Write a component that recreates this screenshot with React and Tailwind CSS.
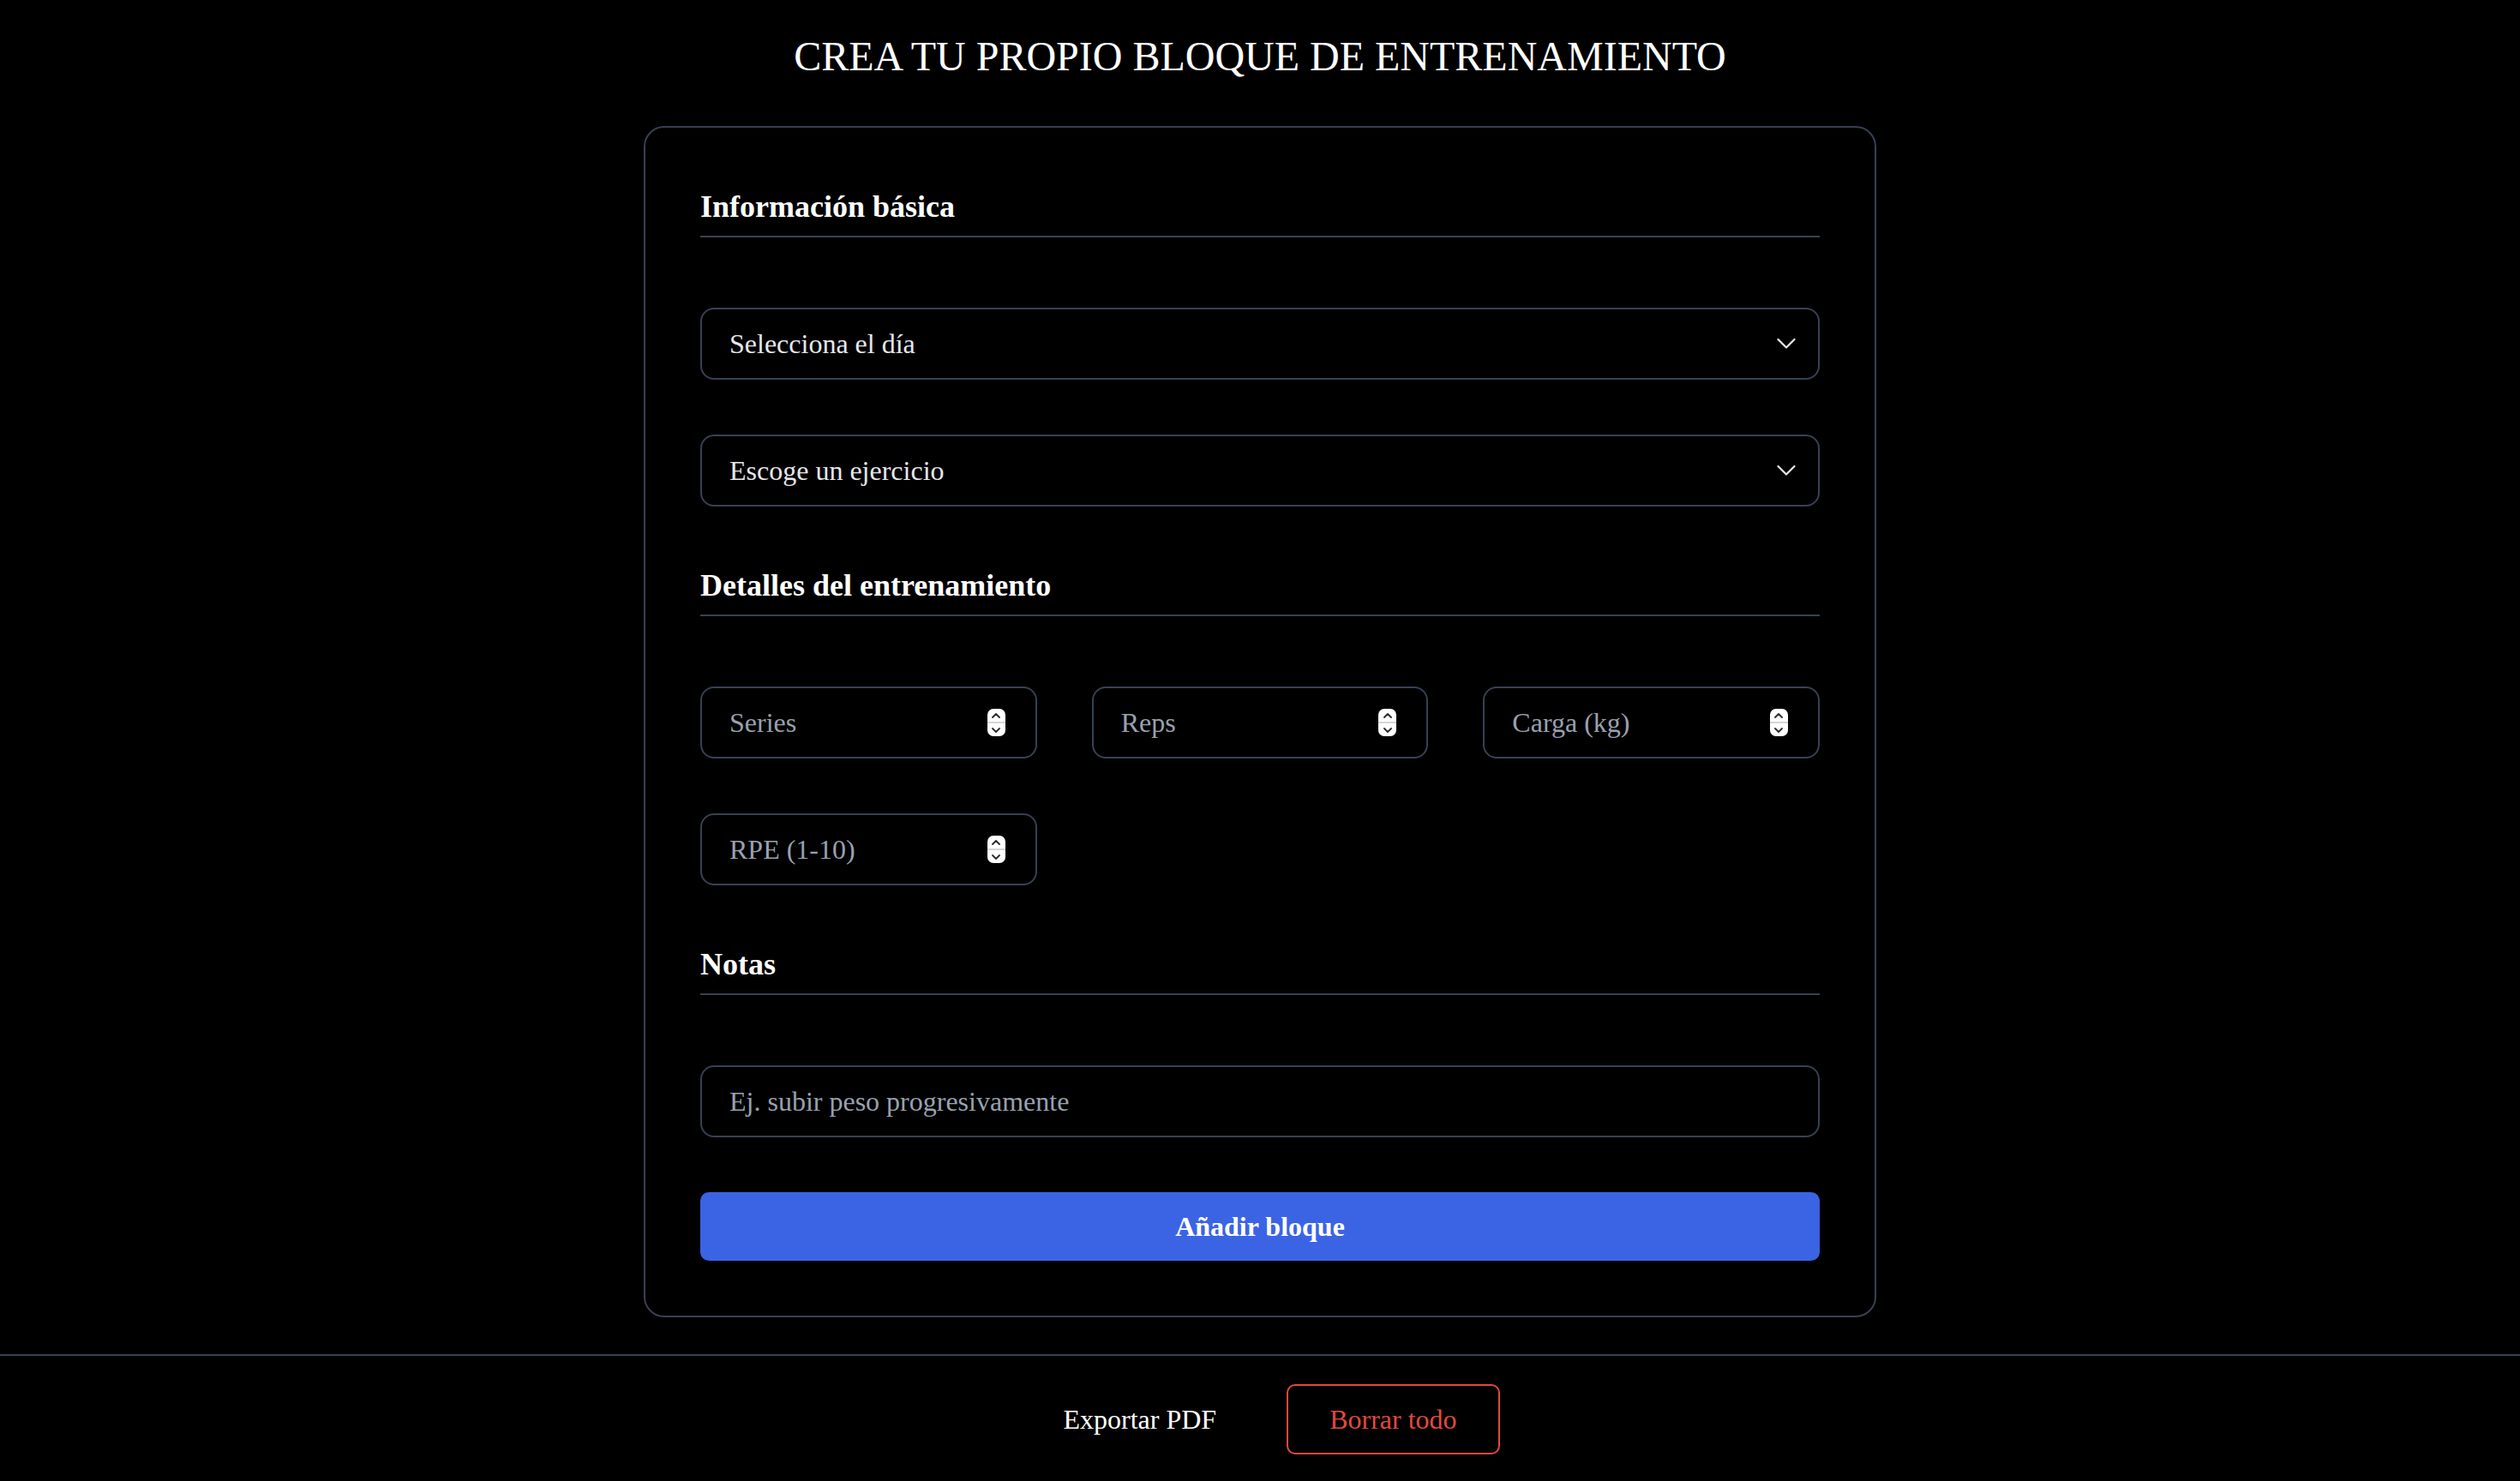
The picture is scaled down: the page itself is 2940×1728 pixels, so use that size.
import React, { useState } from 'react';

const DAYS = ['Lunes', 'Martes', 'Miércoles', 'Jueves', 'Viernes', 'Sábado', 'Domingo'];
const EXERCISES = ['Sentadilla', 'Press banca', 'Peso muerto', 'Press militar', 'Dominadas'];

function SectionTitle({ children }) {
  return (
    <h2 className="border-b-2 border-gray-700 pb-[6px] text-[36px] font-bold leading-[56px] text-white">
      {children}
    </h2>
  );
}

function Chevron() {
  return (
    <svg
      className="pointer-events-none absolute right-[28px] top-1/2 -translate-y-1/2"
      width="22"
      height="13"
      viewBox="0 0 22 13"
      fill="none"
    >
      <polyline points="1.5,1.5 11,11 20.5,1.5" stroke="#e5e7eb" strokeWidth="2.2" strokeLinecap="round" strokeLinejoin="round" />
    </svg>
  );
}

function SelectField({ placeholder, options, value, onChange }) {
  return (
    <div className="relative">
      <select
        value={value}
        onChange={(e) => onChange(e.target.value)}
        className="h-[84px] w-full appearance-none rounded-[16px] border-2 border-gray-700 bg-black px-8 text-[32px] leading-[48px] text-gray-200 outline-none"
      >
        <option value="">{placeholder}</option>
        {options.map((opt) => (
          <option key={opt} value={opt}>
            {opt}
          </option>
        ))}
      </select>
      <Chevron />
    </div>
  );
}

// mac-style stepper drawn by hand, the native one differs per platform
function Stepper() {
  return (
    <div className="pointer-events-none absolute right-[37px] top-1/2 flex h-[32px] w-[21px] -translate-y-1/2 flex-col overflow-hidden rounded-[7px] bg-white">
      <div className="flex flex-1 items-center justify-center border-b-2 border-[#d6d6d6]">
        <svg width="10" height="6" viewBox="0 0 10 6" fill="none">
          <polyline points="1,5 5,1 9,5" stroke="#2b2b2b" strokeWidth="1.8" strokeLinecap="round" strokeLinejoin="round" />
        </svg>
      </div>
      <div className="flex flex-1 items-center justify-center">
        <svg width="10" height="6" viewBox="0 0 10 6" fill="none">
          <polyline points="1,1 5,5 9,1" stroke="#2b2b2b" strokeWidth="1.8" strokeLinecap="round" strokeLinejoin="round" />
        </svg>
      </div>
    </div>
  );
}

function NumberField({ placeholder, value, onChange }) {
  return (
    <div className="relative">
      <input
        type="number"
        placeholder={placeholder}
        value={value}
        onChange={(e) => onChange(e.target.value)}
        className="h-[84px] w-full rounded-[16px] border-2 border-gray-700 bg-black px-8 text-[32px] leading-[48px] text-gray-200 outline-none placeholder:text-gray-400 [appearance:textfield] [&::-webkit-inner-spin-button]:appearance-none [&::-webkit-outer-spin-button]:appearance-none"
      />
      <Stepper />
    </div>
  );
}

export default function App() {
  const [day, setDay] = useState('');
  const [exercise, setExercise] = useState('');
  const [series, setSeries] = useState('');
  const [reps, setReps] = useState('');
  const [load, setLoad] = useState('');
  const [rpe, setRpe] = useState('');
  const [notes, setNotes] = useState('');

  const handleClear = () => {
    setDay('');
    setExercise('');
    setSeries('');
    setReps('');
    setLoad('');
    setRpe('');
    setNotes('');
  };

  return (
    <div className="flex min-h-screen flex-col bg-black font-['Liberation_Serif',serif] text-white">
      <h1 className="mt-[34px] text-center text-[48px] font-normal leading-[64px]">
        CREA TU PROPIO BLOQUE DE ENTRENAMIENTO
      </h1>

      {/* Form card */}
      <div className="mx-auto mt-[49px] flex w-[1438px] flex-col rounded-[24px] border-2 border-gray-700 bg-black p-16">
        <SectionTitle>Información básica</SectionTitle>
        <div className="mt-[82px] flex flex-col gap-16">
          <SelectField placeholder="Selecciona el día" options={DAYS} value={day} onChange={setDay} />
          <SelectField placeholder="Escoge un ejercicio" options={EXERCISES} value={exercise} onChange={setExercise} />
        </div>

        <div className="mt-16">
          <SectionTitle>Detalles del entrenamiento</SectionTitle>
        </div>
        <div className="mt-[82px] grid grid-cols-3 gap-16">
          <NumberField placeholder="Series" value={series} onChange={setSeries} />
          <NumberField placeholder="Reps" value={reps} onChange={setReps} />
          <NumberField placeholder="Carga (kg)" value={load} onChange={setLoad} />
          <NumberField placeholder="RPE (1-10)" value={rpe} onChange={setRpe} />
        </div>

        <div className="mt-16">
          <SectionTitle>Notas</SectionTitle>
        </div>
        <input
          type="text"
          placeholder="Ej. subir peso progresivamente"
          value={notes}
          onChange={(e) => setNotes(e.target.value)}
          className="mt-[82px] h-[84px] w-full rounded-[16px] border-2 border-gray-700 bg-black px-8 text-[32px] leading-[48px] text-gray-200 outline-none placeholder:text-gray-400"
        />

        <button className="mt-16 rounded-[10px] bg-[#3b64e4] py-4 text-[32px] font-bold leading-[48px] text-white">
          Añadir bloque
        </button>
      </div>

      {/* Footer actions */}
      <footer className="mt-[43px] flex justify-center gap-8 border-t-2 border-gray-700 pb-[31px] pt-[33px]">
        <button className="rounded-[10px] border-2 border-transparent px-12 py-[15px] text-[32px] leading-[48px] text-white">
          Exportar PDF
        </button>
        <button
          onClick={handleClear}
          className="rounded-[10px] border-2 border-[#e0493f] px-12 py-[15px] text-[32px] leading-[48px] text-[#e0493f]"
        >
          Borrar todo
        </button>
      </footer>
    </div>
  );
}
